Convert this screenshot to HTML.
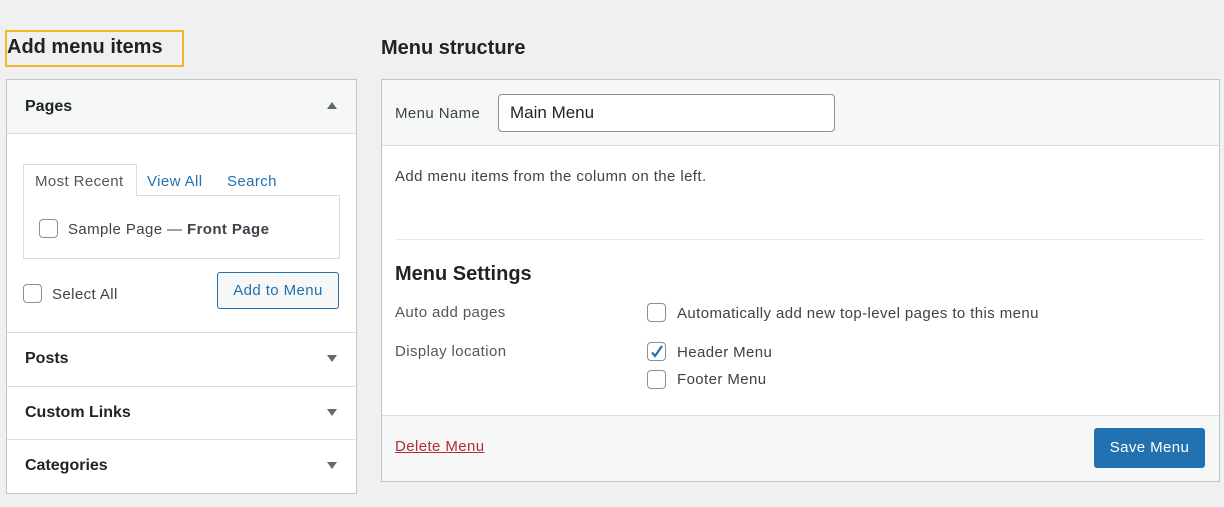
<!DOCTYPE html>
<html><head><style>
*{box-sizing:border-box;margin:0;padding:0}
body{width:1224px;height:507px;background:#f0f0f1;font-family:"Liberation Sans",sans-serif;color:#1d2327;font-size:15px;letter-spacing:.4px;position:relative;overflow:hidden}
.a{position:absolute}
.cb{position:absolute;width:19px;height:19px;border:1px solid #8c8f94;border-radius:4px;background:#fff}
.hd{position:absolute;left:7px;width:348px;height:53px;border-top:1px solid #dcdcde;background:#fff}
.hd b{position:absolute;left:18px;top:17px;font-size:16px;font-weight:bold;letter-spacing:0}
.tri{position:absolute;right:18px;top:22px;width:0;height:0;border-left:5px solid transparent;border-right:5px solid transparent;border-top:7px solid #646970}
</style></head><body>
<div class="a" style="left:5px;top:30px;width:179px;height:37px;border:2px solid #f0b625"></div>
<div class="a" style="left:7px;top:36px;font-size:20px;font-weight:bold;letter-spacing:0">Add menu items</div>
<div class="a" style="left:381px;top:37px;font-size:20px;font-weight:bold;letter-spacing:0">Menu structure</div>

<div class="a" style="left:6px;top:79px;width:351px;height:415px;border:1px solid #c3c4c7;background:#fff"></div>
<div class="a" style="left:7px;top:80px;width:349px;height:54px;background:#f6f7f7;border-bottom:1px solid #dcdcde"></div>
<div class="a" style="left:25px;top:98px;font-size:16px;font-weight:bold;letter-spacing:0">Pages</div>
<div class="a" style="left:327px;top:102px;width:0;height:0;border-left:5px solid transparent;border-right:5px solid transparent;border-bottom:7px solid #646970"></div>
<div class="a" style="left:23px;top:195px;width:317px;height:64px;border:1px solid #dcdcde"></div>
<div class="a" style="left:23px;top:164px;width:114px;height:32px;border:1px solid #dcdcde;border-bottom:none;background:#fff"></div>
<div class="a" style="left:35px;top:173px;color:#50575e">Most Recent</div>
<div class="a" style="left:147px;top:173px;color:#2271b1">View All</div>
<div class="a" style="left:227px;top:173px;color:#2271b1">Search</div>
<div class="cb" style="left:39px;top:219px"></div>
<div class="a" style="left:68px;top:221px;color:#3c434a">Sample Page — <b>Front Page</b></div>
<div class="cb" style="left:23px;top:284px"></div>
<div class="a" style="left:52px;top:286px;color:#3c434a">Select All</div>
<div class="a" style="left:217px;top:272px;width:122px;height:37px;border:1px solid #2271b1;border-radius:3px;background:#f6f7f7;color:#2271b1;text-align:center;line-height:35px">Add to Menu</div>
<div class="hd" style="top:332px"><b>Posts</b><i class="tri"></i></div>
<div class="hd" style="top:386px"><b>Custom Links</b><i class="tri"></i></div>
<div class="hd" style="top:439px"><b>Categories</b><i class="tri"></i></div>

<div class="a" style="left:381px;top:79px;width:839px;height:403px;border:1px solid #c3c4c7;background:#fff"></div>
<div class="a" style="left:382px;top:80px;width:837px;height:66px;background:#f6f7f7;border-bottom:1px solid #dcdcde"></div>
<div class="a" style="left:395px;top:105px;color:#3c434a">Menu Name</div>
<div class="a" style="left:498px;top:94px;width:337px;height:38px;border:1px solid #8c8f94;border-radius:4px;background:#fff;font-size:17px;letter-spacing:0;line-height:36px;padding-left:11px">Main Menu</div>
<div class="a" style="left:395px;top:168px;color:#3c434a">Add menu items from the column on the left.</div>
<div class="a" style="left:395px;top:239px;width:810px;height:1px;background:#e8e8e8"></div>
<div class="a" style="left:395px;top:263px;font-size:20px;font-weight:bold;letter-spacing:0">Menu Settings</div>
<div class="a" style="left:395px;top:304px;color:#50575e">Auto add pages</div>
<div class="cb" style="left:647px;top:303px"></div>
<div class="a" style="left:677px;top:305px;color:#3c434a">Automatically add new top-level pages to this menu</div>
<div class="a" style="left:395px;top:343px;color:#50575e">Display location</div>
<div class="cb" style="left:647px;top:342px"></div>
<svg class="a" style="left:649px;top:344px" width="16" height="16" viewBox="0 0 16 16"><path d="M3 8.5l3 3.5 7-10" fill="none" stroke="#2271b1" stroke-width="2.2"/></svg>
<div class="a" style="left:677px;top:344px;color:#3c434a">Header Menu</div>
<div class="cb" style="left:647px;top:370px"></div>
<div class="a" style="left:677px;top:371px;color:#3c434a">Footer Menu</div>
<div class="a" style="left:382px;top:415px;width:837px;height:66px;background:#f6f7f7;border-top:1px solid #dcdcde"></div>
<div class="a" style="left:395px;top:438px;color:#b32d2e;text-decoration:underline">Delete Menu</div>
<div class="a" style="left:1094px;top:428px;width:111px;height:40px;background:#2271b1;border-radius:3px;color:#fff;text-align:center;line-height:40px">Save Menu</div>
</body></html>
